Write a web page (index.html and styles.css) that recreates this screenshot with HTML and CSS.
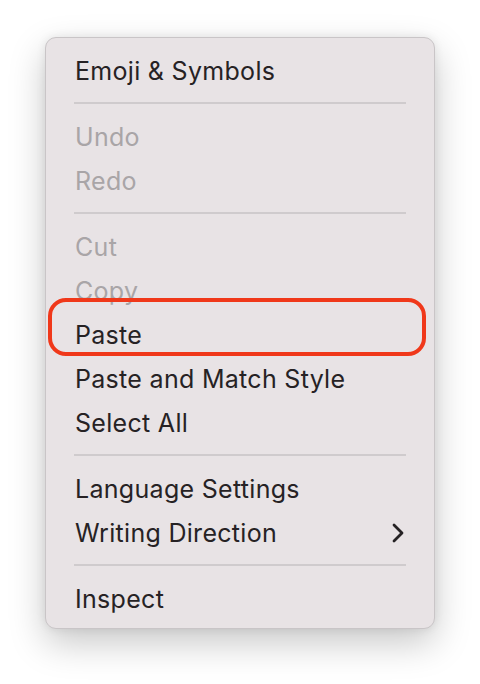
FILE: index.html
```html
<!DOCTYPE html>
<html lang="en">
<head>
  <meta charset="UTF-8">
  <meta name="viewport" content="width=device-width, initial-scale=1.0">
  <title>Context Menu</title>
  <link rel="stylesheet" href="styles.css">
</head>
<body>
  <div class="menu">
    <div class="item">Emoji &amp; Symbols</div>
    <div class="separator"></div>
    <div class="item disabled">Undo</div>
    <div class="item disabled">Redo</div>
    <div class="separator"></div>
    <div class="item disabled">Cut</div>
    <div class="item disabled">Copy</div>
    <div class="item">Paste</div>
    <div class="item">Paste and Match Style</div>
    <div class="item">Select All</div>
    <div class="separator"></div>
    <div class="item">Language Settings</div>
    <div class="item has-sub">
      <span>Writing Direction</span>
      <svg class="chevron" width="12" height="20" viewBox="0 0 12 20">
        <polyline points="2,2 10,10 2,18" fill="none" stroke="#252224" stroke-width="2.8" stroke-linecap="round" stroke-linejoin="round"/>
      </svg>
    </div>
    <div class="separator"></div>
    <div class="item">Inspect</div>

    <div class="highlight"></div>
  </div>
</body>
</html>
```

FILE: styles.css
```css
* {
  margin: 0;
  padding: 0;
  box-sizing: border-box;
}

html {
  background: #fff;
}

body {
  font-family: 'Inter', 'Noto Sans', sans-serif;
  min-height: 684px;
  padding: 37px 0 0 45px;
}

.menu {
  position: relative;
  width: 390px;
  background: #e8e3e5;
  border: 1px solid #c9c5c7;
  border-radius: 11px;
  padding: 10px 28px 8px 28px;
  box-shadow: 0 14px 36px rgba(0, 0, 0, 0.22), 0 0 10px rgba(0, 0, 0, 0.08);
}

.item {
  height: 44px;
  display: flex;
  align-items: center;
  justify-content: space-between;
  padding-left: 1px;
  padding-top: 2px;
  font-size: 25px;
  color: #262224;
  letter-spacing: 0.3px;
}

.item.disabled {
  color: #a9a5a7;
}

.chevron {
  display: block;
  margin-right: 2px;
}

.separator {
  height: 22px;
  display: flex;
  align-items: center;
}

.separator::after {
  content: '';
  display: block;
  width: 100%;
  height: 2px;
  background: #cfcbcd;
}

.highlight {
  position: absolute;
  left: 2px;
  top: 260px;
  width: 378px;
  height: 58px;
  border: 4px solid #f0381a;
  border-radius: 18px;
}
```
